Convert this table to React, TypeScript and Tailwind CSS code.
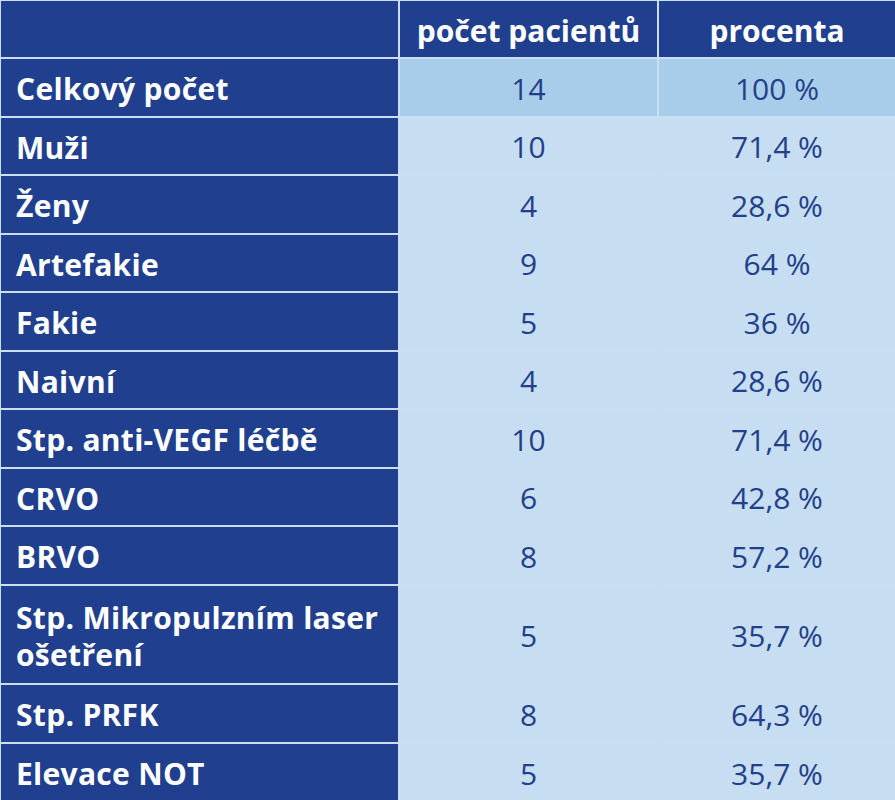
import React from 'react';

const rows: { label: string; count: string; pct: string; tall?: boolean }[] = [
  { label: 'Celkový počet', count: '14', pct: '100 %' },
  { label: 'Muži', count: '10', pct: '71,4 %' },
  { label: 'Ženy', count: '4', pct: '28,6 %' },
  { label: 'Artefakie', count: '9', pct: '64 %' },
  { label: 'Fakie', count: '5', pct: '36 %' },
  { label: 'Naivní', count: '4', pct: '28,6 %' },
  { label: 'Stp. anti-VEGF léčbě', count: '10', pct: '71,4 %' },
  { label: 'CRVO', count: '6', pct: '42,8 %' },
  { label: 'BRVO', count: '8', pct: '57,2 %' },
  { label: 'Stp. Mikropulzním laser ošetření', count: '5', pct: '35,7 %', tall: true },
  { label: 'Stp. PRFK', count: '8', pct: '64,3 %' },
  { label: 'Elevace NOT', count: '5', pct: '35,7 %' },
];

export default function App() {
  return (
    <div
      className="w-[895px] h-[800px] overflow-hidden bg-[#c9def2] pt-px pl-px"
      style={{ fontFamily: '"Open Sans", "Noto Sans", sans-serif' }}
    >
      <div className="grid grid-cols-[397px_257px_1fr] gap-[2px] text-[30px] leading-[34px]">
        {/* header */}
        <div className="h-[56px] bg-[#203f8e]" />
        <div className="h-[56px] bg-[#203f8e] flex items-center justify-center font-bold text-white pt-[3px]">
          počet pacientů
        </div>
        <div className="h-[56px] bg-[#203f8e] flex items-center justify-center font-bold text-white pt-[3px]">
          procenta
        </div>

        {rows.map((r, i) => {
          const h = r.tall ? 'h-[97px]' : i > 9 ? 'h-[57px]' : 'h-[56.5px]';
          const light = i === 0 ? 'bg-[#a8cdeb]' : 'bg-[#c6ddf2]';
          return (
            <React.Fragment key={r.label}>
              <div className={`${h} bg-[#203f8e] flex items-center pl-[15px] pr-2 pt-[3px] font-bold text-white tracking-[0.3px] leading-[37px]`}>
                {r.tall ? (
                  <span>
                    Stp. Mikropulzním laser
                    <br />
                    ošetření
                  </span>
                ) : (
                  r.label
                )}
              </div>
              <div className={`${h} ${light} flex items-center justify-center pt-[3px] text-[#233f8a]`}>{r.count}</div>
              <div className={`${h} ${light} flex items-center justify-center pt-[3px] text-[#233f8a]`}>{r.pct}</div>
            </React.Fragment>
          );
        })}
      </div>
    </div>
  );
}
